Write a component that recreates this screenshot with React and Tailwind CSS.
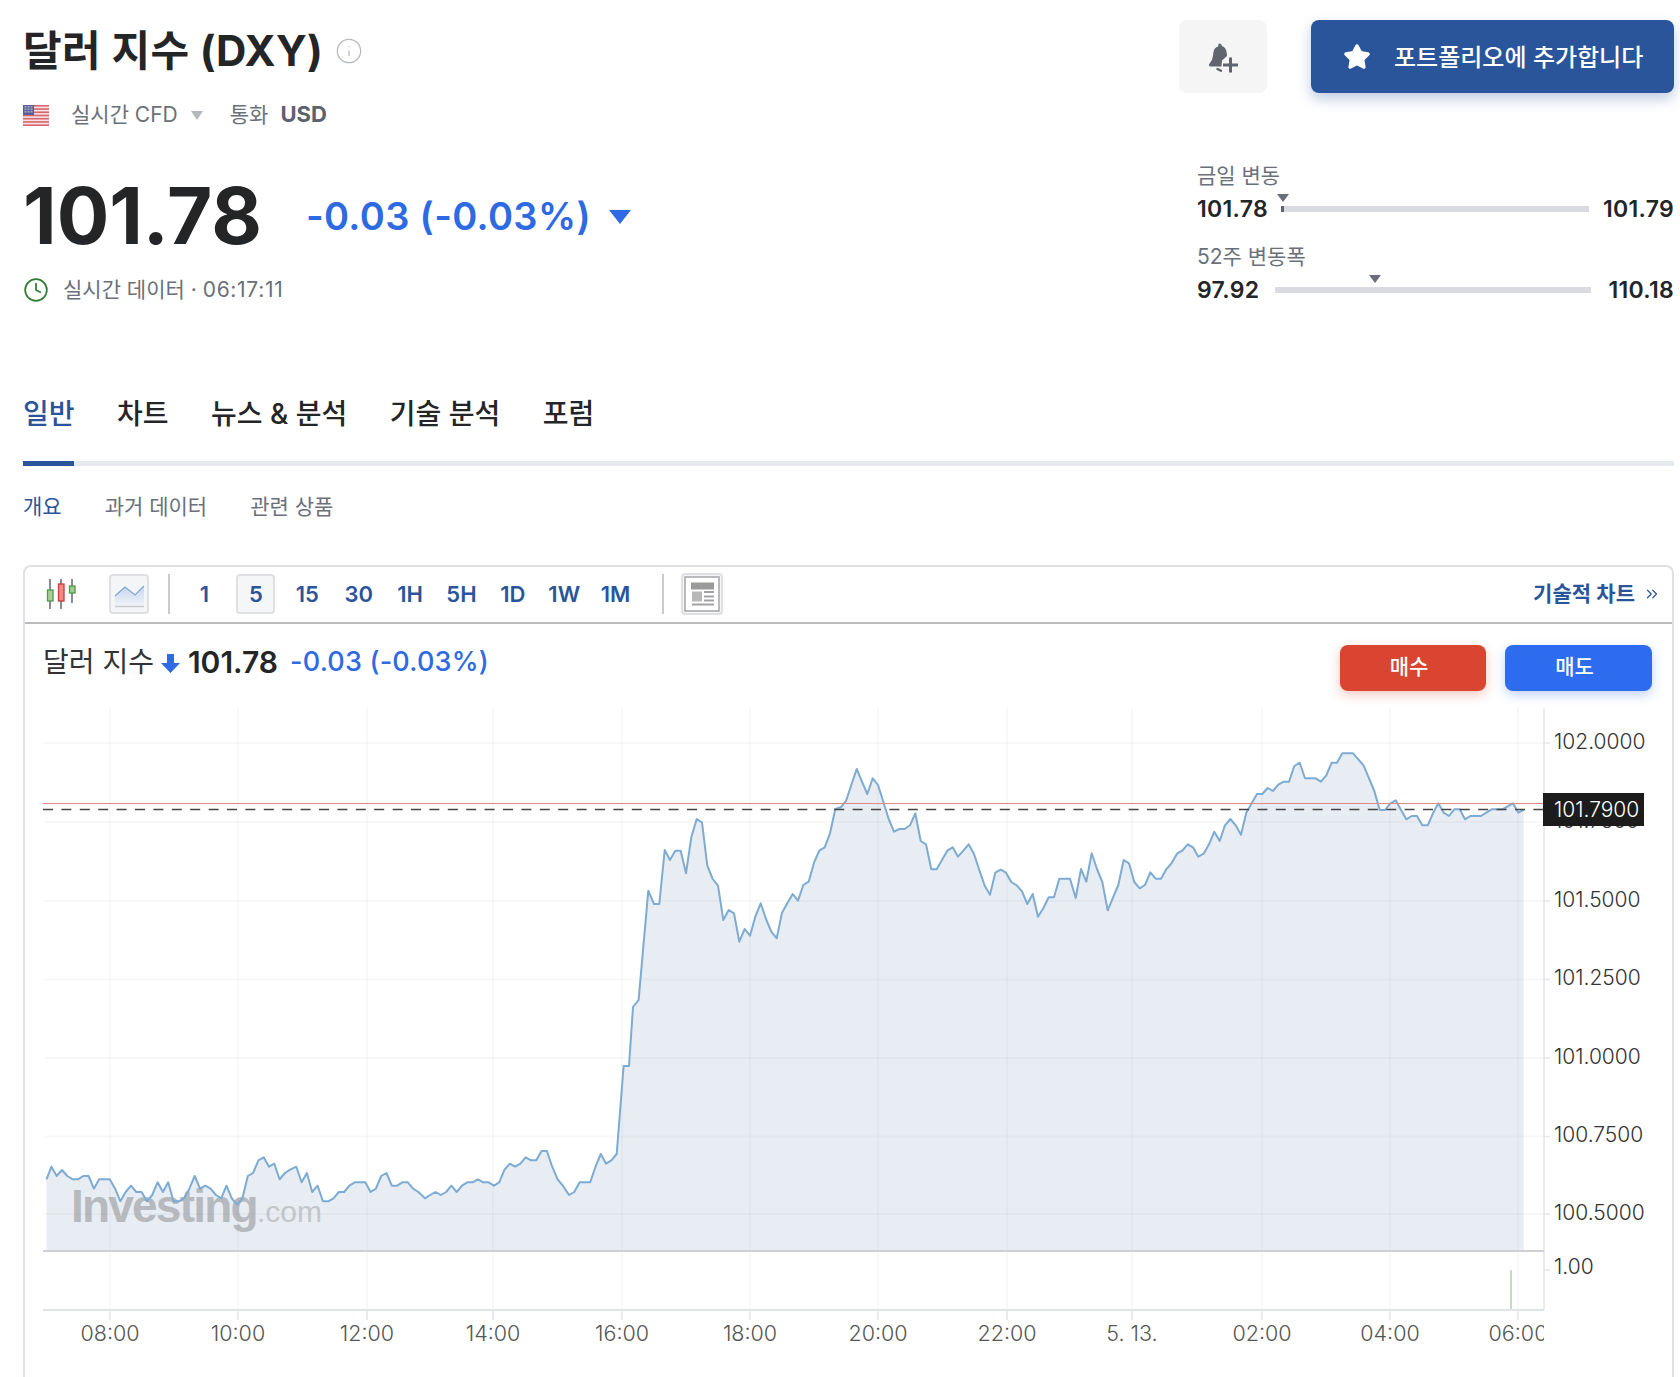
import React from 'react'
import { Info, Clock, Star, ChevronsRight } from 'lucide-react'

// price line, read off the chart in three stretches
const early = "65,238 77,200 90,228 103,210 116,228 129,238 142,238 155,228 168,228 181,266 194,238 207,238 220,238 233,266 246,304 259,276 272,257 285,276 298,276 311,304 324,285 337,247 350,276 363,247 376,304 389,304 402,295 415,266 428,228 441,266 454,257 467,266 480,285 493,295 506,257 519,295 532,314 545,295 558,228 571,219 584,181 597,172 610,200 623,191 636,238 649,219 662,209 677,200 690,247 703,219 716,276 729,257 742,304 755,304 768,295 781,276 794,276 807,257 820,247 833,247 846,247 859,276 872,266 885,228 898,219 911,257 924,257 937,247 950,247 963,266 976,276 992,295 1005,285 1018,276 1031,285 1044,276 1057,257 1070,276 1083,257 1096,247 1109,247 1122,238 1135,247 1148,247 1161,257 1174,247 1187,209 1200,191 1213,200 1226,191 1239,172 1252,181 1265,181 1278,153 1291,153 1304,200 1317,238 1330,257 1345,285 1358,276 1371,247 1384,247 1397,247 1410,200 1423,162 1436,191 1449,181 1462,162"
const mid = "145,512 162,552 178,552 194,390 210,420 226,392 242,392 258,460 274,352 290,297 306,307 322,437 338,477 354,497 370,600 386,570 402,580 418,665 434,627 450,647 466,590 482,550 498,597 514,635 530,655 546,578 562,550 578,522 594,542 610,495 626,485 642,428 658,392 674,382 690,340 706,267 722,262 738,243 754,195 770,147 786,185 802,222 818,175 834,195 850,245 866,297 882,335 898,327 914,327 930,316 946,280 962,363 978,373 994,448 1010,448 1026,420 1042,392 1058,382 1074,410 1090,392 1106,373 1122,402 1138,450 1154,497 1170,524 1186,458 1202,449 1218,458 1234,486 1250,496 1266,514 1282,552 1298,522 1314,590"
const late = "10,565 26,532 42,532 58,476 74,476 90,476 107,534 123,447 139,485 155,400 171,447 187,486 203,571 219,533 235,495 251,420 267,430 283,486 299,505 315,495 331,457 347,476 363,476 379,448 395,429 411,401 427,392 443,373 459,382 475,410 491,401 507,373 523,335 539,363 555,316 571,297 587,316 603,344 619,278 635,250 651,222 667,222 683,204 699,213 715,194 731,185 747,185 763,138 779,128 795,175 811,175 827,175 843,185 859,166 875,128 891,128 907,100 923,100 939,100 955,118 971,137 987,175 1003,213 1019,270 1035,270 1051,250 1067,241 1083,270 1099,298 1115,288 1131,288 1147,316 1163,316 1179,280 1195,250 1211,278 1227,288 1243,268 1259,268 1275,298 1291,288 1307,288 1323,288 1339,278 1355,268 1371,268 1387,268 1403,259 1419,250 1435,278 1451,269"

const parse = (s, x0, sx, y0) =>
  s.split(' ').map((p) => {
    const [x, y] = p.split(',').map(Number)
    return [(x0 + x / sx).toFixed(1), (y0 + y / 3).toFixed(1)]
  })

const points = [
  ...parse(early, 20, 2.45, 1100),
  [623.6, 1066], [629, 1066], [633, 1007], [638.6, 1000],
  ...parse(mid, 600, 3, 720),
  ...parse(late, 1040, 3, 720),
]
const line = points.map((p) => p.join(',')).join(' ')
const area = `46.5,1250 ${line} 1523.7,1250`

const xLines = [110, 238, 367, 493, 622, 750, 878, 1007, 1132, 1262, 1390, 1518]
const xLabels = ['08:00', '10:00', '12:00', '14:00', '16:00', '18:00', '20:00', '22:00', '5. 13.', '02:00', '04:00', '06:00']
const yLines = [
  [743, '102.0000'], [822, '101.7500'], [901, '101.5000'], [979.5, '101.2500'],
  [1058, '101.0000'], [1136.5, '100.7500'], [1214, '100.5000'],
]
const intervals = ['1', '5', '15', '30', '1H', '5H', '1D', '1W', '1M']

function Flag() {
  return (
    <svg width="26" height="21" viewBox="0 0 26 21" className="block">
      <rect width="26" height="21" fill="#f6e3e3" />
      {[0, 1, 2, 3, 4, 5, 6].map((i) => (
        <rect key={i} y={i * 3.23} width="26" height="1.6" fill="#d9656e" />
      ))}
      <rect width="11" height="10" fill="#5a5f93" />
      {[2, 4.500, 7].map((y) => [2.500, 5.500, 8.500].map((x) => (
        <rect key={`${x}-${y}`} x={x - 1} y={y - 1} width="2" height="1.600" fill="#a3a6c6" />
      )))}
    </svg>
  )
}

function Bell() {
  return (
    <svg width="34" height="34" viewBox="0 0 34 34">
      <path d="M13.300 3.500c1.500 0 2.500 1 2.600 2.600 3 1 4.500 3.500 4.800 6.600l.3 3.300-5 4.500-.5 6H4.500c-1.500 0-2-1.300-1.200-2.500 2-2.500 3.200-5 3.700-8.500l.5-3.500c.4-2.800 1.900-4.700 4.700-5.500.1-1.800.3-3 1.100-3z" fill="#62656f" />
      <path d="M11.500 29l3.500 1.800" fill="none" stroke="#62656f" strokeWidth="2.400" strokeLinecap="round" />
      <path d="M24.500 17.500v15M17 25h15" stroke="#62656f" strokeWidth="3" />
    </svg>
  )
}

function Candles() {
  return (
    <svg width="30" height="30" viewBox="0 0 30 30" className="block">
      <path d="M4 0v30M15 0v30M26 0v24" stroke="#666" strokeWidth="1.500" />
      <rect x="1.500" y="11" width="5.500" height="11" fill="#a6cf9a" stroke="#4c9a4b" strokeWidth="1.300" />
      <rect x="12.500" y="5" width="5.500" height="17" fill="#f08a80" stroke="#c4403b" strokeWidth="1.300" />
      <rect x="23.500" y="7" width="5.500" height="7" fill="#9ccf8e" stroke="#4c9a4b" strokeWidth="1.300" />
    </svg>
  )
}

function AreaIcon() {
  return (
    <svg width="32" height="24" viewBox="0 0 32 24" className="block">
      <defs>
        <linearGradient id="areafill" x1="0" y1="0" x2="0" y2="1">
          <stop offset="0" stopColor="#c6d6ee" />
          <stop offset="1" stopColor="#eef2f8" />
        </linearGradient>
      </defs>
      <path d="M2 12l10-9 10 8 9-9v20H2z" fill="url(#areafill)" />
      <path d="M2 12l10-9 10 8 9-9" fill="none" stroke="#7fa6d2" strokeWidth="1.200" />
      <path d="M2 22.500h29" stroke="#c8ccd0" strokeWidth="1.500" />
    </svg>
  )
}

function NewsIcon() {
  return (
    <svg width="36" height="36" viewBox="0 0 36 36" className="block">
      <rect x="1" y="1" width="34" height="34" fill="#fff" stroke="#a8aaad" strokeWidth="1.600" />
      <rect x="7" y="6.500" width="23" height="7" fill="#9a9a9a" />
      <rect x="8" y="15.500" width="10" height="10" fill="#b8b8b8" />
      <path d="M20 16h10M20 20.500h10M20 24.500h10M8 28.500h22" stroke="#a0a2a5" strokeWidth="1.800" />
    </svg>
  )
}

function RangeRow({ low, high, gap, barW, pointer, mark }) {
  return (
    <div className="flex items-center h-[28px] text-[23px] font-semibold tracking-[0.3px] text-[#232526]">
      <span>{low}</span>
      <div className={`relative h-[6px] bg-[#dadbe0] ${gap} ${barW}`}>
        {mark && <div className="absolute left-0 top-0 h-[6px] w-[3px] bg-[#5f6470]" />}
        <div className={`absolute top-[-12px] h-0 w-0 border-x-[6px] border-t-[8px] border-x-transparent border-t-[#6a6e78] ${pointer}`} />
      </div>
      <span className="ml-auto">{high}</span>
    </div>
  )
}

function Chart() {
  return (
    <svg width="1647" height="677" viewBox="25 700 1647 677" className="block" fontFamily="Inter, sans-serif" fontWeight="300">
      <defs>
        <clipPath id="xclip">
          <rect x="26" y="1312" width="1518" height="60" />
        </clipPath>
      </defs>
      <polygon points={area} fill="#e8edf4" />
      <text x="71" y="1222" fontFamily="'Liberation Sans', sans-serif" fontWeight="700" fontSize="46" letterSpacing="-1.800" fill="#b6babe">Investing</text>
      <text x="257" y="1222" fontFamily="'Liberation Sans', sans-serif" fontWeight="400" fontSize="30" fill="#c3c6c9">.com</text>
      {xLines.map((x) => (
        <g key={x}>
          <line x1={x} y1="708" x2={x} y2="1310" stroke="#6e7c8c" strokeOpacity="0.05" strokeWidth="2" />
          <line x1={x} y1="1310" x2={x} y2="1320" stroke="#dfe3ea" strokeWidth="1.500" />
        </g>
      ))}
      {yLines.map(([y, label]) => (
        <g key={label}>
          <line x1="44" y1={y} x2="1544" y2={y} stroke="#6e7c8c" strokeOpacity="0.05" strokeWidth="2" />
          <line x1="1544" y1={y} x2="1550" y2={y} stroke="#e3e6ea" strokeWidth="1.500" />
          <text x="1554" y={y + 5.500} fontSize="21" fill="#333">{label}</text>
        </g>
      ))}
      <polyline points={line} fill="none" stroke="#7dabd2" strokeWidth="2" strokeLinejoin="round" />
      <line x1="43" y1="803.500" x2="1544" y2="803.500" stroke="#e08a85" strokeWidth="1.200" />
      <line x1="43" y1="809.500" x2="1544" y2="809.500" stroke="#444" strokeWidth="1.300" strokeDasharray="10 8.400" />
      <line x1="1544" y1="708" x2="1544" y2="1310" stroke="#e3e6ea" strokeWidth="1.500" />
      <line x1="43" y1="1251" x2="1544" y2="1251" stroke="#cdd1d6" strokeWidth="2" />
      <line x1="43" y1="1310" x2="1544" y2="1310" stroke="#e0e4ea" strokeWidth="2" />
      <line x1="1511" y1="1270" x2="1511" y2="1309" stroke="#a5d6ae" strokeWidth="1.500" />
      <line x1="1544" y1="1270" x2="1550" y2="1270" stroke="#e3e6ea" strokeWidth="1.500" />
      <text x="1554" y="1274" fontSize="21" fill="#333">1.00</text>
      <rect x="1543" y="793" width="101" height="33" fill="#1c1c1c" />
      <text x="1554" y="817" fontSize="21" fill="#fff">101.7900</text>
      <g clipPath="url(#xclip)">
        {xLabels.map((label, i) => (
          <text key={label} x={xLines[i]} y="1341" textAnchor="middle" fontSize="21.500" fill="#555">{label}</text>
        ))}
      </g>
    </svg>
  )
}

export default function App() {
  return (
    <div className="h-[1377px] w-full overflow-hidden bg-white pl-[23px] pr-[6px] pt-[20px] font-['Inter','Noto_Sans_CJK_KR',sans-serif] text-[#232526]">
      {/* Header */}
      <div className="flex justify-between">
        <div>
          <div className="flex h-[60px] items-center">
            <h1 className="text-[42px] font-bold tracking-[0.4px] whitespace-nowrap">달러 지수 (DXY)</h1>
            <Info className="ml-[12px] mt-[2px] h-[28px] w-[28px] text-[#b5b9be]" strokeWidth={1.1} />
          </div>
          <div className="mt-[21px] flex h-[28px] items-center text-[21px] text-[#6a7079]">
            <Flag />
            <span className="ml-[22px]">실시간 CFD</span>
            <div className="ml-[13px] mt-[1px] h-0 w-0 border-x-[6.5px] border-t-[9px] border-x-transparent border-t-[#b5b9be]" />
            <span className="ml-[27px]">통화</span>
            <span className="mb-[2px] ml-[12px] text-[22px] font-bold text-[#5b616e]">USD</span>
          </div>
          <div className="mt-[47px] flex h-[80px] items-center">
            <span className="text-[78px] leading-none font-bold">101.78</span>
            <span className="ml-[44px] text-[38px] font-semibold tracking-[0.35px] text-[#2d6ae3]">-0.03 (-0.03%)</span>
            <div className="ml-[18px] mt-[1px] h-0 w-0 border-x-[11px] border-t-[14px] border-x-transparent border-t-[#2d6ae3]" />
          </div>
          <div className="mt-[20px] flex h-[28px] items-center text-[21px] text-[#6a7079]">
            <Clock className="h-[26px] w-[26px] text-[#2e7d32]" strokeWidth={1.6} />
            <span className="ml-[14px]">실시간 데이터 · <span className="tracking-[0.7px]">06:17:11</span></span>
          </div>
        </div>

        <div className="w-[495px]">
          <div className="flex justify-end gap-[44px]">
            <button className="flex h-[73px] w-[88px] items-center justify-center rounded-lg bg-[#f5f5f6]">
              <Bell />
            </button>
            <button className="flex h-[73px] w-[363px] items-center rounded-lg bg-[#2a559b] pl-[32px] text-[24px] font-medium text-white shadow-[0_6px_14px_rgba(42,85,155,0.3)]">
              <Star className="h-[28px] w-[28px] fill-white text-white" />
              <span className="ml-[23px] pt-[2px] whitespace-nowrap">포트폴리오에 추가합니다</span>
            </button>
          </div>
          <div className="mt-[69px] pl-[18px]">
            <div className="h-[28px] text-[21px] leading-[28px] text-[#6a7079]">금일 변동</div>
            <div className="mt-[5px]">
              <RangeRow low="101.78" high="101.79" gap="ml-[13px]" barW="w-[308px]" pointer="left-[-4px]" mark />
            </div>
            <div className="mt-[20px] h-[28px] text-[21px] leading-[28px] text-[#6a7079]">52주 변동폭</div>
            <div className="mt-[5px]">
              <RangeRow low="97.92" high="110.18" gap="ml-[16px]" barW="w-[316px]" pointer="left-[94px]" />
            </div>
          </div>
        </div>
      </div>

      {/* Tabs */}
      <div className="mt-[90px] flex h-[40px] items-center gap-[42.5px] text-[28px] font-medium leading-none">
        <span className="text-[#2a559b]">일반</span>
        <span>차트</span>
        <span>뉴스 & 분석</span>
        <span>기술 분석</span>
        <span>포럼</span>
      </div>
      <div className="mt-[27px] h-[5px] bg-[#e6e9ed]">
        <div className="h-[5px] w-[51px] bg-[#2a559b]" />
      </div>
      <div className="mt-[26px] flex h-[30px] items-center gap-[43px] text-[21px] text-[#6a7079]">
        <span className="text-[#2a559b]">개요</span>
        <span>과거 데이터</span>
        <span>관련 상품</span>
      </div>

      {/* Chart card */}
      <div className="mt-[43px] h-[812px] rounded-t-lg border-2 border-b-0 border-[#dfe1e4]">
        <div className="flex h-[57px] items-center border-b-2 border-[#b8babc] pb-[2px] pl-[21px] pr-[11px]">
          <Candles />
          <div className="ml-[33px] flex h-[40px] w-[40px] items-center justify-center rounded-[4px] border-2 border-[#dfe0e3] bg-[#f4f5f7] pt-[4px]">
            <AreaIcon />
          </div>
          <div className="ml-[19px] h-[40px] w-[2px] bg-[#c9cbce]" />
          <div className="ml-[15px] flex gap-[12.4px] text-[22px] font-semibold text-[#2a559b]">
            {intervals.map((t) => (
              <div
                key={t}
                className={`flex h-[40px] w-[39px] items-center justify-center rounded-[4px] pt-[1px] ${t === '5' ? 'border-2 border-[#dfe0e3] bg-[#f4f6f8]' : ''}`}
              >
                {t}
              </div>
            ))}
          </div>
          <div className="ml-[27px] h-[40px] w-[2px] bg-[#c9cbce]" />
          <div className="ml-[17px] flex h-[42px] w-[42px] items-center justify-center rounded-[4px] border-2 border-[#dfe0e3] bg-[#f5f6f7]">
            <NewsIcon />
          </div>
          <div className="ml-auto flex items-center pt-[1px] text-[21px] font-semibold text-[#2a559b]">
            기술적 차트
            <ChevronsRight className="ml-[8px] h-[18px] w-[18px]" strokeWidth={1.6} />
          </div>
        </div>

        <div className="flex h-[76px] items-start justify-between pl-[18px] pr-[20px]">
          <div className="mt-[18px] flex h-[40px] items-center">
            <span className="text-[28px] text-[#333]">달러 지수</span>
            <svg width="19" height="19" viewBox="0 0 19 19" className="ml-[7px] mt-[2px]">
              <path d="M6 0h7v9h6L9.500 19 0 9h6z" fill="#2d6ae3" />
            </svg>
            <span className="ml-[8px] text-[30px] font-semibold">101.78</span>
            <span className="ml-[12px] text-[27px] font-medium tracking-[0.2px] text-[#2d6ae3]">-0.03 (-0.03%)</span>
          </div>
          <div className="mt-[21px] flex gap-[19px] text-[21px] font-medium text-white">
            <button className="flex h-[46px] w-[146px] items-center justify-center rounded-lg bg-[#d94530] pr-[8px] pb-[2px] shadow-[0_4px_12px_rgba(217,69,48,0.3)]">매수</button>
            <button className="flex h-[46px] w-[147px] items-center justify-center rounded-lg bg-[#2d6cee] pr-[8px] pb-[2px] shadow-[0_4px_12px_rgba(45,108,238,0.3)]">매도</button>
          </div>
        </div>

        <Chart />
      </div>
    </div>
  )
}
